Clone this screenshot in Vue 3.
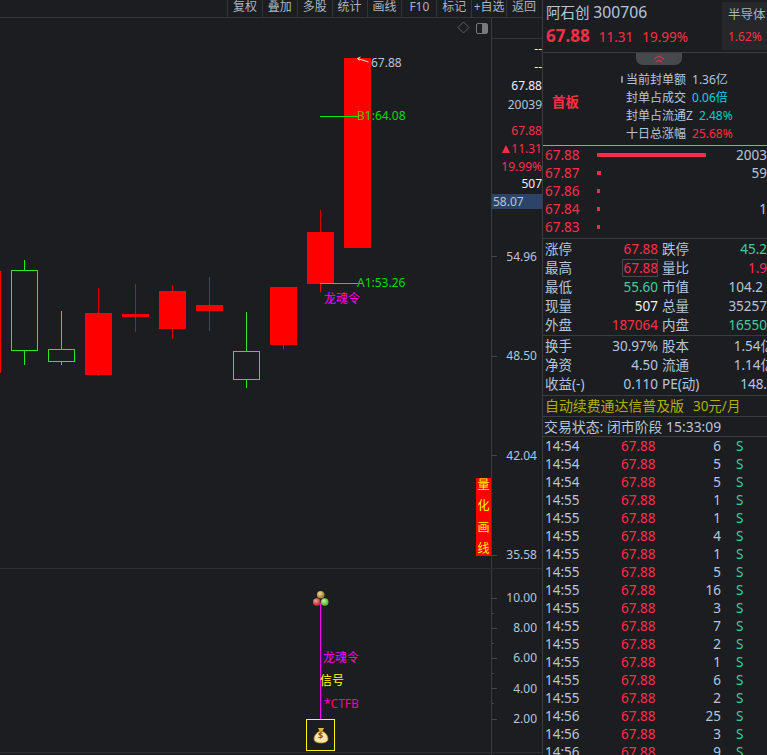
<template>
  <div class="page">
    <div class="left">
      <div class="toolbar">
        <span v-for="t in tools" :key="t" class="tool">{{ t }}</span>
      </div>
      <div class="chart-wrap">
        <div class="chart">
          <svg class="canvas" width="542" height="737" viewBox="0 18 542 737">
            <defs>
              <radialGradient id="fruitGold" cx="40%" cy="35%"><stop offset="0" stop-color="#f0e0a0" /><stop offset="1" stop-color="#a8843c" /></radialGradient>
              <radialGradient id="fruitRed" cx="40%" cy="35%"><stop offset="0" stop-color="#f4a0a0" /><stop offset="1" stop-color="#c83c3c" /></radialGradient>
              <radialGradient id="fruitGreen" cx="40%" cy="35%"><stop offset="0" stop-color="#d0f4a0" /><stop offset="1" stop-color="#58c040" /></radialGradient>
            </defs>
            <line x1="0" y1="568.5" x2="542" y2="568.5" stroke="#2b2e33" />
            <line x1="0" y1="752.5" x2="542" y2="752.5" stroke="#2b2e33" />
            <line x1="491" y1="38.5" x2="542" y2="38.5" stroke="#33353a" />
            <line v-for="t in axisTicks" :key="t.y" x1="492" :y1="t.y + 0.5" :x2="492 + t.w" :y2="t.y + 0.5" stroke="#44464b" />
            <rect x="-26" y="271" width="27" height="102" fill="#ff0000" />
            <g v-for="(c, i) in candles" :key="i">
              <line :x1="c.x + 0.5" :y1="c.top" :x2="c.x + 0.5" :y2="c.low" :stroke="c.wick" />
              <rect v-if="c.hollow" :x="c.x - 12.5" :y="c.y" width="26" :height="c.h" fill="#1c1d21" stroke="#22ee22" />
              <rect v-else :x="c.x - 13" :y="c.y" width="27" :height="c.h" fill="#ff0000" />
            </g>
            <line x1="320" y1="116.500" x2="358" y2="116.500" stroke="#00ee00" />
            <line x1="320" y1="283.500" x2="358" y2="283.500" stroke="#00ee00" />
            <line x1="320.500" y1="284" x2="320.500" y2="292" stroke="#ff0000" />
            <path d="M357.500 58.500l11 3.500M357.500 58.500l3-1.500M357.500 58.500l2 2" stroke="#f4d8d8" fill="none" />
            <line x1="320.500" y1="603" x2="320.500" y2="719" stroke="#ff00ff" />
            <circle cx="320.700" cy="594.700" r="3.800" fill="url(#fruitGold)" />
            <circle cx="316.700" cy="602" r="3.800" fill="url(#fruitRed)" />
            <circle cx="324.700" cy="602" r="3.800" fill="url(#fruitGreen)" />
            <path d="M458 27.500l5.500-5.500 5.500 5.500-5.500 5.500z" fill="none" stroke="#5c5e62" />
            <rect x="476.500" y="23.500" width="11" height="10" rx="1.500" fill="none" stroke="#77797d" />
            <rect x="482" y="24" width="5" height="9" fill="#77797d" />
          </svg>
          <span class="lbl top-price">67.88</span>
          <span class="lbl b1">B1:64.08</span>
          <span class="lbl a1">A1:53.26</span>
          <span class="lbl soul soul-top">龙魂令</span>
          <span class="lbl soul soul-bot">龙魂令</span>
          <span class="lbl signal">信号</span>
          <span class="lbl ctfb">*CTFB</span>
          <div class="quant"><span>量</span><span>化</span><span>画</span><span>线</span></div>
          <div class="bag">
            <svg width="16" height="17" viewBox="0 0 16 17">
              <path d="M5 1h6l-1.500 3h-3z" fill="#e8b23c" />
              <path d="M6 4.500h4c3 1.500 5 4.500 5 7.200 0 3-3 4.300-7 4.300s-7-1.300-7-4.300c0-2.700 2-5.700 5-7.200z" fill="#f8e6a8" stroke="#b07c28" stroke-width=".8" />
            </svg>
            <span class="dollar">$</span>
          </div>
        </div>
        <div class="axis">
          <span v-for="(a, i) in axis" :key="i" class="axis-item" :class="a.cls" :style="{ top: a.y + 'px' }">
            <i v-if="a.arrow" class="tri"></i>{{ a.t }}
          </span>
        </div>
      </div>
    </div>

    <div class="side">
      <div class="head">
        <div class="head-main">
          <div class="name">阿石创 <span>300706</span></div>
          <div class="quote"><b>67.88</b><span>11.31</span><span>19.99%</span></div>
        </div>
        <div class="sector">
          <div>半导体</div>
          <div class="red">1.62%</div>
        </div>
      </div>
      <div class="seal">
        <div class="tab"><svg width="12" height="8" viewBox="0 0 12 8"><path d="M1 4l5-3 5 3M3 7l3-2 3 2" fill="none" stroke="#ff2d46" /></svg></div>
        <div class="first">首板</div>
        <div class="seal-list">
          <div><i class="pin"></i>当前封单额<em class="pale">1.36亿</em></div>
          <div>封单占成交<em class="cyan">0.06倍</em></div>
          <div>封单占流通Z<em class="teal">2.48%</em></div>
          <div>十日总涨幅<em class="red">25.68%</em></div>
        </div>
      </div>
      <div class="book">
        <div v-for="b in book" :key="b.p" class="book-row">
          <span class="red">{{ b.p }}</span>
          <i class="bar" :style="{ width: b.w + 'px' }"></i>
          <span class="vol">{{ b.v }}</span>
        </div>
      </div>
      <div class="stats">
        <div v-for="r in stats1" :key="r.k" class="stat-row">
          <span>{{ r.k }}</span>
          <span class="val" :class="r.c"><i :class="{ boxed: r.box }">{{ r.v }}</i></span>
          <span class="k2">{{ r.k2 }}</span>
          <span class="val2" :class="[r.c2, { nudge: r.nudge }]">{{ r.v2 }}</span>
        </div>
      </div>
      <div class="stats second">
        <div v-for="r in stats2" :key="r.k" class="stat-row">
          <span>{{ r.k }}</span>
          <span class="val"><i>{{ r.v }}</i></span>
          <span class="k2">{{ r.k2 }}</span>
          <span class="val2" :class="{ over: r.over }">{{ r.v2 }}</span>
        </div>
      </div>
      <div class="promo">自动续费通达信普及版<span>30元/月</span></div>
      <div class="status">交易状态: 闭市阶段 15:33:09</div>
      <div class="ticks">
        <div v-for="(t, i) in ticks" :key="i" class="tick">
          <span>{{ t[0] }}</span>
          <span class="red">67.88</span>
          <span class="t-vol">{{ t[1] }}</span>
          <span class="t-s">S</span>
        </div>
      </div>
    </div>
  </div>
</template>

<script setup>
const tools = ['复权', '叠加', '多股', '统计', '画线', 'F10', '标记', '+自选', '返回']

const RED = '#dd0000'
const GREEN = '#22ee22'
const candles = [
  { x: 24, top: 260, low: 365, y: 270.5, h: 80, wick: GREEN, hollow: true },
  { x: 61, top: 311, low: 365, y: 349.5, h: 12, wick: GREEN, hollow: true },
  { x: 98, top: 288, low: 376, y: 313, h: 62, wick: RED },
  { x: 135, top: 284, low: 332, y: 314, h: 3, wick: RED },
  { x: 172, top: 285, low: 339, y: 291, h: 38, wick: RED },
  { x: 209, top: 277, low: 331, y: 305, h: 6, wick: RED },
  { x: 246, top: 312, low: 388, y: 351.5, h: 28, wick: GREEN, hollow: true },
  { x: 283, top: 287, low: 349, y: 287, h: 58, wick: RED },
  { x: 320, top: 210, low: 292, y: 232, h: 52, wick: RED },
  { x: 357, top: 58, low: 248, y: 58, h: 190, wick: RED },
]

const axisTicks = [
  { y: 256, w: 5 }, { y: 356, w: 5 }, { y: 455, w: 5 }, { y: 555, w: 5 },
  { y: 598, w: 5 }, { y: 613, w: 2 }, { y: 628, w: 5 }, { y: 643, w: 2 },
  { y: 658, w: 5 }, { y: 673, w: 2 }, { y: 688, w: 5 }, { y: 703, w: 2 }, { y: 719, w: 5 },
]

const axis = [
  { t: '--', y: 22.5, cls: 'white top' },
  { t: '--', y: 40.5, cls: 'white top' },
  { t: '67.88', y: 59.5, cls: 'white top' },
  { t: '20039', y: 78.5, cls: 'top' },
  { t: '67.88', y: 104.5, cls: 'red top' },
  { t: '11.31', y: 122.5, cls: 'red top', arrow: true },
  { t: '19.99%', y: 140.5, cls: 'red top' },
  { t: '507', y: 157.5, cls: 'white top' },
  { t: '58.07', y: 176, cls: 'cur' },
  { t: '54.96', y: 230.5 },
  { t: '48.50', y: 329.5 },
  { t: '42.04', y: 429.5 },
  { t: '35.58', y: 528.5 },
  { t: '10.00', y: 571.5 },
  { t: '8.00', y: 601.5 },
  { t: '6.00', y: 631.5 },
  { t: '4.00', y: 662.5 },
  { t: '2.00', y: 692.5 },
]

const book = [
  { p: '67.88', w: 109, v: '2003' },
  { p: '67.87', w: 4, v: '59' },
  { p: '67.86', w: 3, v: '' },
  { p: '67.84', w: 3, v: '1' },
  { p: '67.83', w: 3, v: '' },
]

const stats1 = [
  { k: '涨停', v: '67.88', c: 'red', k2: '跌停', v2: '45.2', c2: 'teal2' },
  { k: '最高', v: '67.88', c: 'red', k2: '量比', v2: '1.9', c2: 'red', box: true },
  { k: '最低', v: '55.60', c: 'teal2', k2: '市值', v2: '104.2', nudge: true },
  { k: '现量', v: '507', c: 'white', k2: '总量', v2: '35257' },
  { k: '外盘', v: '187064', c: 'red', k2: '内盘', v2: '16550', c2: 'teal2' },
]

const stats2 = [
  { k: '换手', v: '30.97%', k2: '股本', v2: '1.54亿', over: true },
  { k: '净资', v: '4.50', k2: '流通', v2: '1.14亿', over: true },
  { k: '收益(-)', v: '0.110', k2: 'PE(动)', v2: '148.' },
]

const ticks = [
  ['14:54', 6], ['14:54', 5], ['14:54', 5], ['14:55', 1], ['14:55', 1], ['14:55', 4],
  ['14:55', 1], ['14:55', 5], ['14:55', 16], ['14:55', 3], ['14:55', 7], ['14:55', 2],
  ['14:55', 1], ['14:55', 6], ['14:55', 2], ['14:56', 25], ['14:56', 3], ['14:56', 9],
]
</script>

<style>
html, body { margin: 0; background: #1c1d21; overflow: hidden; }
</style>

<style scoped>
.page {
  display: flex;
  width: 767px;
  height: 755px;
  overflow: hidden;
  background: #1c1d21;
  color: #b4c6dc;
  font-family: "Noto Sans", "Noto Sans CJK SC", sans-serif;
  font-size: 13.5px;
}

.left {
  width: 543px;
  flex-shrink: 0;
  border-right: 1px solid #3a3c40;
  box-sizing: border-box;
  display: flex;
  flex-direction: column;
}

.toolbar {
  height: 17px;
  display: flex;
  justify-content: flex-end;
  padding-right: 1px;
  border-bottom: 1px solid #33353a;
  flex-shrink: 0;
}

.tool {
  width: 34.9px;
  text-align: center;
  font-size: 12px;
  line-height: 13px;
  color: #a9b4c0;
  border-left: 1px solid #33353a;
  box-sizing: border-box;
  white-space: nowrap;
}

.chart-wrap {
  flex: 1;
  display: flex;
  min-height: 0;
}

.chart {
  position: relative;
  width: 491px;
  flex-shrink: 0;
  border-right: 1px solid #3a3c40;
}

.canvas { position: absolute; left: 0; top: 0; }

.lbl { position: absolute; font-size: 12px; line-height: 14px; white-space: nowrap; }
.top-price { left: 371px; top: 38px; color: #b4c6dc; }
.b1 { left: 357px; top: 91px; color: #00dd00; }
.a1 { left: 357px; top: 258px; color: #00dd00; }
.soul { color: #ff00ff; }
.soul-top { left: 324px; top: 274px; }
.soul-bot { left: 323px; top: 633px; }
.signal { left: 320px; top: 656px; color: #ffff00; }
.ctfb { left: 324px; top: 679px; color: #ee00aa; }

.quant {
  position: absolute;
  left: 476px;
  top: 460px;
  width: 15px;
  height: 78px;
  background: #ff0000;
  color: #ffff00;
  font-size: 12px;
  line-height: 14px;
  display: flex;
  flex-direction: column;
  justify-content: space-between;
  align-items: center;
}

.bag {
  position: absolute;
  left: 306px;
  top: 701px;
  width: 29px;
  height: 32px;
  box-sizing: border-box;
  border: 1px solid #ffff00;
  display: flex;
  align-items: center;
  justify-content: center;
}

.dollar {
  position: absolute;
  left: 0;
  right: 0;
  top: 10px;
  text-align: center;
  font-size: 9px;
  line-height: 12px;
  font-weight: 700;
  color: #8a4a1c;
}

.axis { position: relative; flex: 1; }

.axis-item {
  position: absolute;
  right: 5px;
  font-size: 12px;
  line-height: 15px;
  white-space: nowrap;
}

.axis-item.top { right: 0; }
.axis-item.white { color: #f0f0f0; }
.axis-item.red { color: #ff2d46; }
.axis-item.cur {
  left: 0;
  right: 0;
  height: 15px;
  padding-left: 1px;
  background: #2b4468;
  color: #b4c6dc;
}

.tri {
  display: inline-block;
  width: 0;
  height: 0;
  margin-right: 1px;
  border-left: 4px solid transparent;
  border-right: 4px solid transparent;
  border-bottom: 8px solid #ff2d46;
}

.side { flex: 1; min-width: 0; display: flex; flex-direction: column; }

.head {
  height: 52px;
  display: flex;
  justify-content: space-between;
  border-bottom: 1px solid #3a3c40;
  flex-shrink: 0;
}

.head-main { padding: 3px 0 0 3px; }
.name { font-size: 14.5px; line-height: 18px; color: #b4c6dc; white-space: nowrap; }
.name span { font-size: 15.7px; }
.quote { display: flex; align-items: baseline; gap: 9px; margin-top: 5px; font-size: 13.5px; line-height: 20px; color: #ff2d46; }
.quote b { font-size: 17px; }

.sector {
  width: 45px;
  margin-top: 2px;
  height: 48px;
  background: #26272b;
  font-size: 12.5px;
  line-height: 16px;
  padding: 5px 0 0 6px;
  box-sizing: border-box;
  color: #a9b4c0;
  overflow: hidden;
  white-space: nowrap;
}
.sector .red { margin-top: 6px; font-size: 12px; }

.red { color: #ff2d46; }

.seal {
  position: relative;
  height: 92px;
  padding-left: 83px;
  border-bottom: 1px solid #c99a45;
  flex-shrink: 0;
}

.tab {
  position: absolute;
  left: 93px;
  top: 0;
  width: 46px;
  height: 12px;
  background: #48494d;
  border-radius: 0 0 7px 7px;
  display: flex;
  align-items: center;
  justify-content: center;
}

.first {
  position: absolute;
  left: 9px;
  top: 39px;
  color: #ff2d46;
  font-size: 13.5px;
  line-height: 20px;
  font-weight: 700;
}

.seal-list {
  padding-top: 18px;
  font-size: 12px;
  line-height: 18px;
  color: #b4c6dc;
  white-space: nowrap;
}

.seal-list em { font-style: normal; margin-left: 6px; }

.pin {
  position: absolute;
  left: 78px;
  top: 23px;
  width: 2px;
  height: 7px;
  background: #8a8c90;
  border-radius: 1px;
}

.pale { color: #b4c6dc; }
.cyan { color: #00d2e6; }
.teal { color: #00cfc0; }

.book {
  padding: 0 0 2px 2px;
  border-bottom: 1px solid #3a3c40;
  flex-shrink: 0;
}

.book-row {
  height: 18px;
  line-height: 18px;
  position: relative;
  white-space: nowrap;
}

.bar {
  position: absolute;
  left: 52px;
  top: 7px;
  height: 4px;
  background: #ff2d46;
}

.vol { position: absolute; right: 0; top: 0; }

.stats {
  padding-top: 1px;
  padding-left: 2px;
  border-bottom: 1px solid #3a3c40;
  flex-shrink: 0;
}

.stat-row {
  display: grid;
  grid-template-columns: 33px 80px 40px 1fr;
  height: 19px;
  line-height: 19px;
  white-space: nowrap;
}

.val { text-align: right; }
.val i { font-style: normal; }
.val2 { text-align: right; }
.over { margin-right: -7px; }
.nudge { padding-right: 4px; }
.k2 { padding-left: 4px; }
.white { color: #f0f0f0; }
.teal2 { color: #3ccf9c; }

.boxed {
  display: inline-block;
  height: 18px;
  line-height: 18px;
  padding-left: 1px;
  outline: 1px solid #48494d;
  outline-offset: -1px;
}

.second { padding-bottom: 1px; }

.promo {
  height: 20px;
  line-height: 20px;
  padding-left: 2px;
  color: #b0b000;
  font-size: 13.9px;
  border-bottom: 1px solid #3a3c40;
  flex-shrink: 0;
  white-space: nowrap;
}

.promo span { margin-left: 9px; font-size: 13.5px; }

.status {
  height: 19px;
  line-height: 19px;
  padding-left: 1px;
  font-size: 13.9px;
  border-bottom: 1px solid #3a3c40;
  flex-shrink: 0;
  white-space: nowrap;
}

.ticks { overflow: hidden; flex: 1; padding-left: 2px; }

.tick {
  display: grid;
  grid-template-columns: 76px 40px 60px 1fr;
  height: 18px;
  line-height: 18px;
}

.t-vol { text-align: right; }
.t-s { color: #3ccf9c; padding-left: 15px; }
</style>
